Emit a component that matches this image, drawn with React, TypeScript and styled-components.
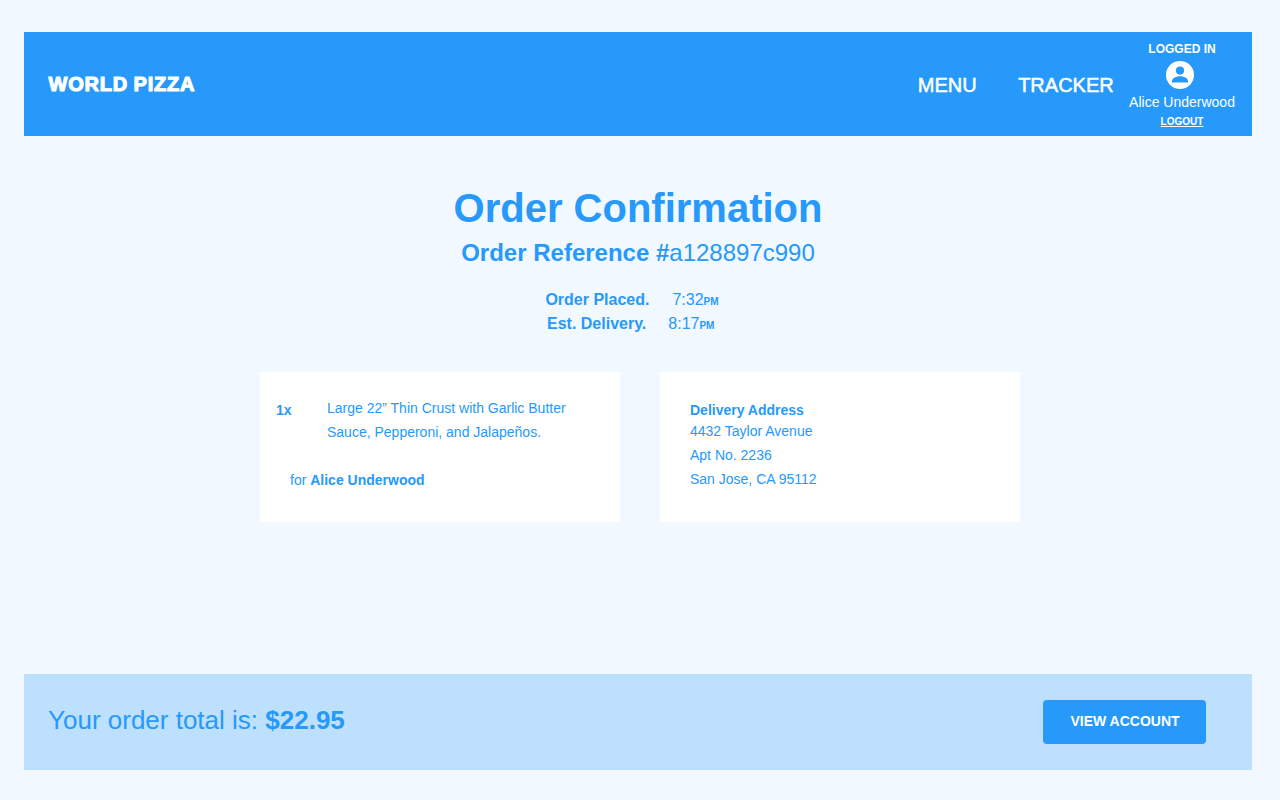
import React from 'react';
import styled, { createGlobalStyle } from 'styled-components';

const Global = createGlobalStyle`
  * { box-sizing: border-box; }
  html, body { margin: 0; background: #f1f8ff; }
  body { font-family: "Liberation Sans", Arial, sans-serif; color: #2699fb; }
  h1, h2, h3, p { margin: 0; }
`;
const Page = styled.div`
  width: 1280px;
  height: 800px;
  padding: 32px 28px 30px 24px;
  display: flex;
  flex-direction: column;
  overflow: hidden;
  background: #f1f8ff;
`;
const Header = styled.header`
  height: 104px;
  flex: none;
  display: flex;
  align-items: center;
  padding: 0 8px 0 24px;
  background: #2699fb;
  color: #fff;
`;
const Brand = styled.div`
  font-size: 20px;
  line-height: 24px;
  font-weight: 900;
  letter-spacing: 0.8px;
  word-spacing: -0.8px;
  padding-left: 0.5px;
  -webkit-text-stroke: 1.1px #fff;
  margin-right: auto;
`;
const NavLink = styled.a<{ $gap: number }>`
  font-size: 20px;
  line-height: 24px;
  margin: 2px ${p => p.$gap}px 0 0;
  -webkit-text-stroke: 0.5px #fff;
`;
const Account = styled.div`
  width: 124px;
  height: 104px;
  padding-top: 9px;
  display: flex;
  flex-direction: column;
  align-items: center;
`;
const Status = styled.div`
  font-size: 12px;
  line-height: 16px;
  font-weight: 700;
`;
const Avatar = styled.svg`
  width: 28px;
  height: 28px;
  margin: 4px 4px 5px 0;
`;
const UserName = styled.div`
  font-size: 14px;
  line-height: 16px;
  white-space: nowrap;
`;
const Logout = styled.a`
  font-size: 10px;
  line-height: 14px;
  font-weight: 700;
  margin-top: 5px;
  text-decoration: underline;
`;
const Main = styled.main`
  flex: 1;
  display: flex;
  flex-direction: column;
  align-items: center;
  padding: 48px 0 0;
`;
const Title = styled.h1`
  font-size: 40px;
  line-height: 48px;
  white-space: nowrap;
`;
const Reference = styled.h2`
  font-size: 24px;
  line-height: 32px;
  margin-top: 5px;
  font-weight: 400;
  white-space: nowrap;
`;
const Times = styled.div`
  width: 186px;
  margin-top: 19px;
`;
const TimeRow = styled.div<{ $indent: number; $gap: number }>`
  display: flex;
  align-items: baseline;
  gap: ${p => p.$gap}px;
  padding-left: ${p => p.$indent}px;
  font-size: 16px;
  line-height: 24px;
  white-space: nowrap;
  small { font-size: 10px; font-weight: 700; line-height: 1; }
`;
const Cards = styled.div`
  display: flex;
  gap: 40px;
  width: 760px;
  margin: 36px 0 0 4px;
`;
const Card = styled.section<{ $left: number }>`
  width: 360px;
  height: 150px;
  padding: 24px 16px 0 ${p => p.$left}px;
  background: #fff;
  font-size: 14px;
  line-height: 24px;
`;
const Item = styled.div`
  display: flex;
`;
const Quantity = styled.strong`
  width: 51px;
  padding-top: 2px;
`;
const Description = styled.p`
  white-space: nowrap;
`;
const Recipient = styled.p`
  margin: 24px 0 0 14px;
`;
const AddressTitle = styled.h3`
  font-size: 14px;
  line-height: 20px;
  padding-top: 4px;
  margin-bottom: -1px;
`;
const Footer = styled.footer`
  height: 96px;
  flex: none;
  display: flex;
  align-items: center;
  justify-content: space-between;
  padding: 0 46px 0 24px;
  background: #bce0fd;
`;
const Total = styled.p`
  font-size: 26px;
  line-height: 32px;
  margin-bottom: 4px;
`;
const Button = styled.button`
  width: 163px;
  height: 44px;
  border: 0;
  border-radius: 4px;
  padding: 0 0 2px 1px;
  background: #2699fb;
  color: #fff;
  font: 700 14px "Liberation Sans", Arial, sans-serif;
`;

export default function App() {
  return (
    <Page>
      <Global />
      <Header>
        <Brand>WORLD PIZZA</Brand>
        <NavLink $gap={41.5}>MENU</NavLink>
        <NavLink $gap={6.3}>TRACKER</NavLink>
        <Account>
          <Status>LOGGED IN</Status>
          <Avatar viewBox="0 0 28 28">
            <circle cx="14" cy="14" r="14" fill="#fff" />
            <circle cx="14" cy="9.6" r="4.1" fill="#2699fb" />
            <path d="M6 21.500v-1.300c0-3.200 4.500-4.900 8-4.900s8 1.700 8 4.900v1.300z" fill="#2699fb" />
          </Avatar>
          <UserName>Alice Underwood</UserName>
          <Logout>LOGOUT</Logout>
        </Account>
      </Header>
      <Main>
        <Title>Order Confirmation</Title>
        <Reference><strong>Order Reference #</strong>a128897c990</Reference>
        <Times>
          <TimeRow $indent={0.4} $gap={23}><strong>Order Placed.</strong><span>7:32<small>PM</small></span></TimeRow>
          <TimeRow $indent={2} $gap={22}><strong>Est. Delivery.</strong><span>8:17<small>PM</small></span></TimeRow>
        </Times>
        <Cards>
          <Card $left={16}>
            <Item>
              <Quantity>1x</Quantity>
              <Description>Large 22” Thin Crust with Garlic Butter<br />Sauce, Pepperoni, and Jalapeños.</Description>
            </Item>
            <Recipient>for <strong>Alice Underwood</strong></Recipient>
          </Card>
          <Card $left={30}>
            <AddressTitle>Delivery Address</AddressTitle>
            <p>4432 Taylor Avenue<br />Apt No. 2236<br />San Jose, CA 95112</p>
          </Card>
        </Cards>
      </Main>
      <Footer>
        <Total>Your order total is: <strong>$22.95</strong></Total>
        <Button>VIEW ACCOUNT</Button>
      </Footer>
    </Page>
  );
}
